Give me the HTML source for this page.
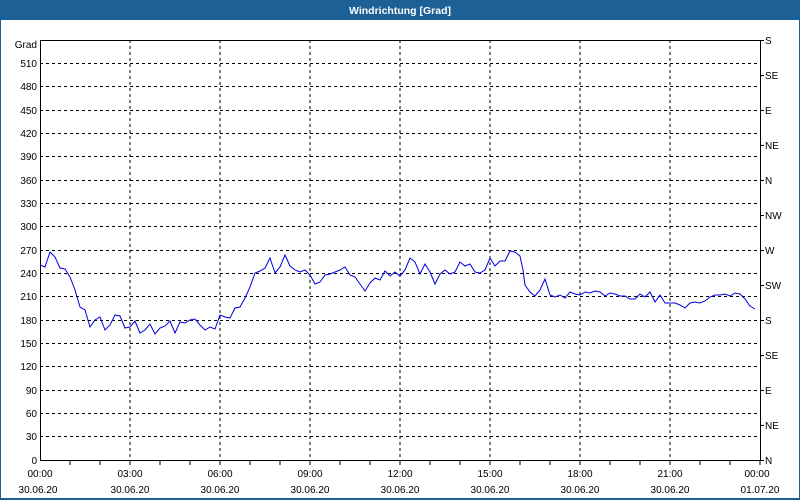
<!DOCTYPE html>
<html><head><meta charset="utf-8"><style>
html,body{margin:0;padding:0;width:800px;height:500px;overflow:hidden;background:#fff}
svg text{font-family:"Liberation Sans",sans-serif;font-size:10px;fill:#000}
</style></head><body>
<svg width="800" height="500" viewBox="0 0 800 500" xmlns="http://www.w3.org/2000/svg">
<rect x="0" y="0" width="800" height="500" fill="#1c6096"/>
<rect x="1" y="20" width="798" height="478" fill="#fff"/>
<text x="400" y="14" text-anchor="middle" style="fill:#fff;font-weight:bold;font-size:10.5px">Windrichtung [Grad]</text>
<g stroke="#000" stroke-width="1" stroke-dasharray="3,3" fill="none" shape-rendering="crispEdges">
<path d="M130 40V460M220 40V460M310 40V460M400 40V460M490 40V460M580 40V460M670 40V460"/>
<path d="M40 63.5H760M40 86.5H760M40 110.5H760M40 133.5H760M40 156.5H760M40 180.5H760M40 203.5H760M40 226.5H760M40 250.5H760M40 273.5H760M40 296.5H760M40 320.5H760M40 343.5H760M40 366.5H760M40 390.5H760M40 413.5H760M40 436.5H760"/>
</g>
<g stroke="#000" stroke-width="1" fill="none" shape-rendering="crispEdges">
<path d="M40.5 40V460.5H760.5M40 40.5H760.5V460"/>
<path d="M70 460v5M100 460v5M130 460v5M160 460v5M190 460v5M220 460v5M250 460v5M280 460v5M310 460v5M340 460v5M370 460v5M400 460v5M430 460v5M460 460v5M490 460v5M520 460v5M550 460v5M580 460v5M610 460v5M640 460v5M670 460v5M700 460v5M730 460v5M760 460v5"/>
<path d="M760 40.5h4M760 75.5h4M760 110.5h4M760 145.5h4M760 180.5h4M760 215.5h4M760 250.5h4M760 285.5h4M760 320.5h4M760 355.5h4M760 390.5h4M760 425.5h4M760 460.5h4"/>
</g>
<polyline fill="none" stroke="#0000e0" stroke-width="1" points="40,265 45,267 50,252 55,257 60,268 65,269 70,277 75,290 80,307 85,310 90,327 95,320 100,317 105,330 110,325 115,315 120,316 125,328 130,327 135,321 140,333 145,330 150,324 155,334 160,328 165,326 170,321 175,333 180,322 185,323 190,320 195,319 200,325 205,330 210,327 215,329 220,315 225,317 230,318 235,308 240,307 245,298 250,287 255,273 260,271 265,268 270,258 275,273 280,267 285,255 290,266 295,270 300,272 305,270 310,275 315,284 320,282 325,275 330,274 335,272 340,270 345,267 350,275 355,277 360,284 365,291 370,283 375,278 380,280 385,271 390,276 395,272 400,276 405,270 410,258 415,262 420,274 425,264 430,272 435,284 440,274 445,270 450,274 455,272 460,262 465,266 470,264 475,272 480,273 485,270 490,258 495,266 500,261 505,261 510,251 515,252 520,256 523,270 525,285 530,292 535,296 540,290 545,279 550,295 555,297 560,295 565,298 570,292 575,294 580,295 585,292 590,293 595,291 600,292 605,296 610,293 615,294 620,296 625,296 630,299 635,299 640,294 645,297 650,292 655,302 660,295 665,303 670,303 675,303 680,305 685,308 690,303 695,302 700,303 705,301 710,297 715,295 720,295 725,294 730,296 735,293 740,294 745,299 750,306 755,309"/>
<g text-anchor="end">
<text x="37" y="48">Grad</text>
<text x="37" y="67">510</text><text x="37" y="90">480</text><text x="37" y="114">450</text><text x="37" y="137">420</text><text x="37" y="160">390</text><text x="37" y="184">360</text><text x="37" y="207">330</text><text x="37" y="230">300</text><text x="37" y="254">270</text><text x="37" y="277">240</text><text x="37" y="300">210</text><text x="37" y="324">180</text><text x="37" y="347">150</text><text x="37" y="370">120</text><text x="37" y="394">90</text><text x="37" y="417">60</text><text x="37" y="440">30</text><text x="37" y="464">0</text>
</g>
<g>
<text x="765" y="44">S</text><text x="765" y="79">SE</text><text x="765" y="114">E</text><text x="765" y="149">NE</text><text x="765" y="184">N</text><text x="765" y="219">NW</text><text x="765" y="254">W</text><text x="765" y="289">SW</text><text x="765" y="324">S</text><text x="765" y="359">SE</text><text x="765" y="394">E</text><text x="765" y="429">NE</text><text x="765" y="464">N</text>
</g>
<g text-anchor="middle">
<text x="40" y="477">00:00</text><text x="130" y="477">03:00</text><text x="220" y="477">06:00</text><text x="310" y="477">09:00</text><text x="400" y="477">12:00</text><text x="490" y="477">15:00</text><text x="580" y="477">18:00</text><text x="670" y="477">21:00</text><text x="757" y="477">00:00</text>
<text x="38" y="493">30.06.20</text><text x="130" y="493">30.06.20</text><text x="220" y="493">30.06.20</text><text x="310" y="493">30.06.20</text><text x="400" y="493">30.06.20</text><text x="490" y="493">30.06.20</text><text x="580" y="493">30.06.20</text><text x="670" y="493">30.06.20</text><text x="760" y="493">01.07.20</text>
</g>
</svg>
</body></html>
